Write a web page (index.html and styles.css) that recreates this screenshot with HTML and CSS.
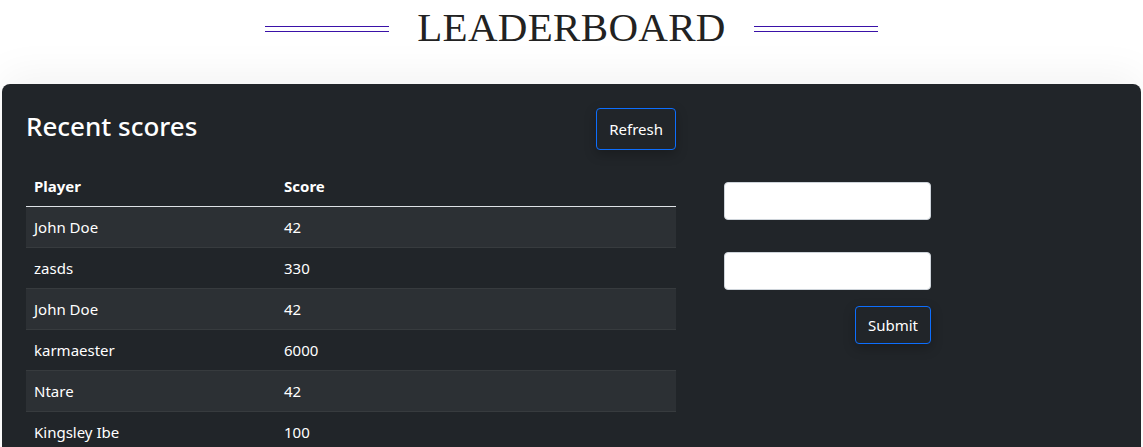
FILE: index.html
```html
<!DOCTYPE html>
<html>
<head>
<meta charset="utf-8">
<link rel="stylesheet" href="styles.css">
</head>
<body>
<header class="title-bar">
  <span class="rule"></span>
  <h1 class="title">LEADERBOARD</h1>
  <span class="rule"></span>
</header>
<main class="card">
  <section class="scores">
    <div class="scores-head">
      <h2 class="scores-title">Recent scores</h2>
      <button class="btn">Refresh</button>
    </div>
    <table class="table">
      <thead>
        <tr><th class="col-player">Player</th><th>Score</th></tr>
      </thead>
      <tbody>
        <tr><td>John Doe</td><td>42</td></tr>
        <tr><td>zasds</td><td>330</td></tr>
        <tr><td>John Doe</td><td>42</td></tr>
        <tr><td>karmaester</td><td>6000</td></tr>
        <tr><td>Ntare</td><td>42</td></tr>
        <tr><td>Kingsley Ibe</td><td>100</td></tr>
      </tbody>
    </table>
  </section>
  <form class="add-form">
    <input class="field" type="text">
    <input class="field" type="text">
    <button class="btn" type="button">Submit</button>
  </form>
</main>
</body>
</html>
```
FILE: styles.css
```css
* { box-sizing: border-box; }
html, body { margin: 0; padding: 0; }
body {
  background: #fff;
  font-family: "Noto Sans", "Open Sans", sans-serif;
  color: #fff;
  overflow: hidden;
}
.title-bar {
  display: flex;
  justify-content: center;
  align-items: center;
  gap: 28px;
  height: 60px;
  color: #222;
}
.rule {
  width: 124px;
  height: 6px;
  border-top: 1px solid #3a12a8;
  border-bottom: 1px solid #3a12a8;
  margin-top: -2px;
}
.title {
  margin: 0;
  font-family: "Liberation Serif", serif;
  font-weight: 400;
  font-size: 41px;
  letter-spacing: 0.3px;
  line-height: 1;
  color: #222;
  margin-top: -6px;
}
.card {
  margin: 24px 2px 0;
  background: #212529;
  border-radius: 8px;
  min-height: 360px;
  padding: 24px 24px;
  display: flex;
  align-items: flex-start;
  gap: 48px;
  box-shadow: 0 -10px 40px rgba(0,0,0,0.05);
}
.scores { width: 650px; }
.scores-head {
  display: flex;
  justify-content: space-between;
  align-items: center;
  margin-bottom: 16px;
}
.scores-title {
  margin: 0 0 5px;
  font-size: 26px;
  font-weight: 500;
  line-height: 1.2;
}
.btn {
  font-family: inherit;
  font-size: 15px;
  color: #fff;
  background: #212529;
  border: 1px solid #0d6efd;
  border-radius: 4px;
  padding: 0 12px;
  height: 42px;
  box-shadow: 0 4px 12px rgba(0,0,0,0.25);
}
.table {
  width: 100%;
  border-collapse: collapse;
  font-size: 15px;
}
.table th, .table td {
  text-align: left;
  padding: 0 8px;
  height: 41px;
  border-bottom: 1px solid #373b3e;
}
.table th {
  font-weight: 700;
  height: 40px;
}
.table thead tr th { border-bottom: 1px solid #dee2e6; }
.col-player { width: 250px; }
.table tbody tr:nth-child(odd) { background: #2c3034; }
.add-form {
  width: 207px;
  margin-top: 74px;
  display: flex;
  flex-direction: column;
  align-items: flex-end;
}
.field {
  width: 100%;
  height: 38px;
  border: 1px solid #ced4da;
  border-radius: 4px;
  background: #fff;
  margin-bottom: 32px;
}
.field + .field { margin-bottom: 16px; }
.add-form .btn { height: 38px; }
```
